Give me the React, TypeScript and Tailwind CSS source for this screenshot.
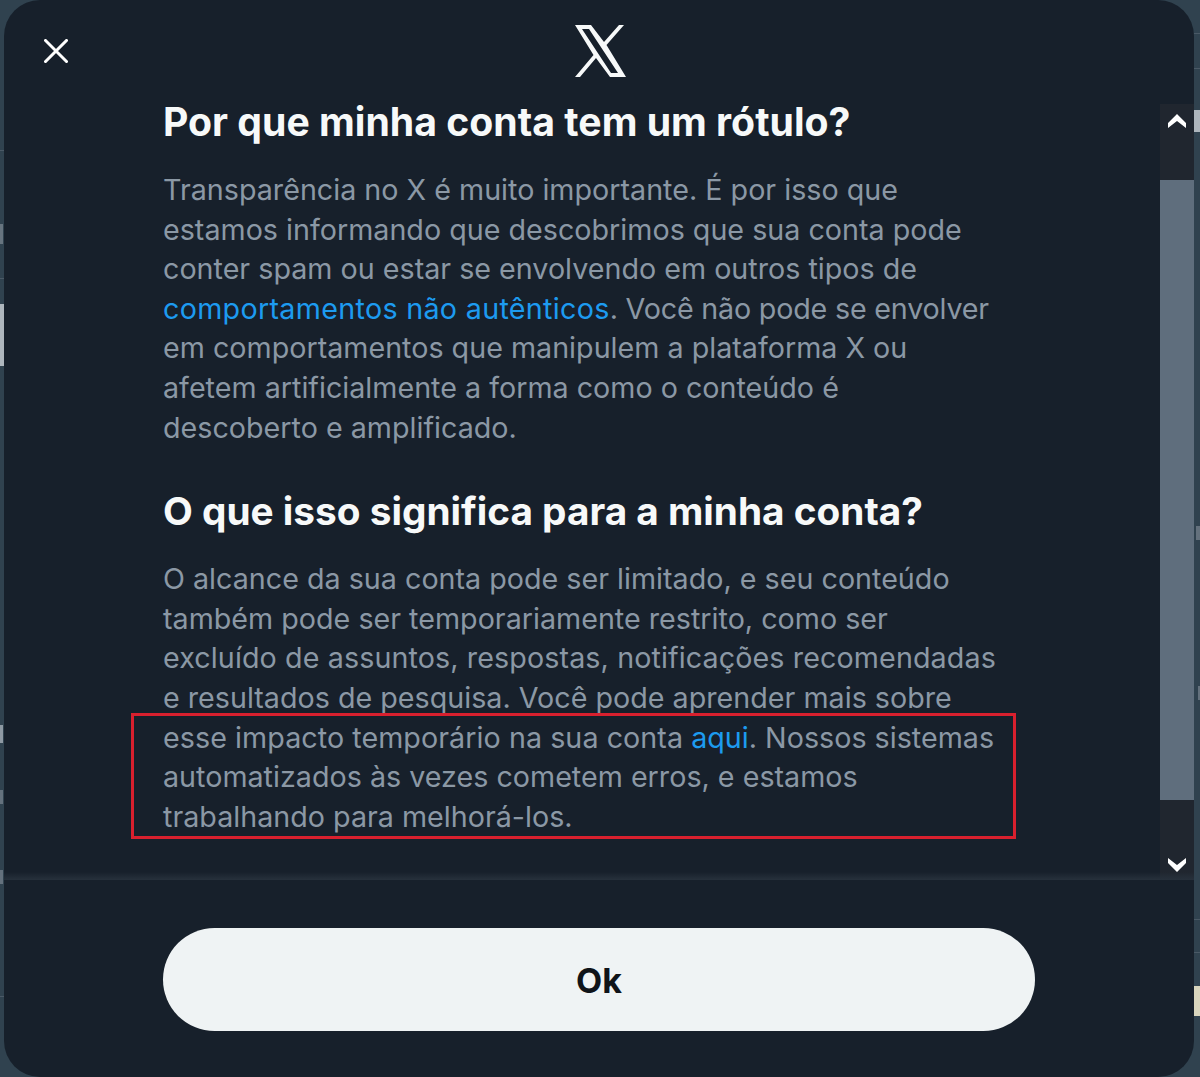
const body = "text-[28.7px] leading-[39.6px] text-[#8b98a5]"
const heading = "leading-[36px] font-bold text-[#f7f9f9]"

// bits of the page behind the dialog, only visible in the gutters
const gutterBits = [
  "left-0 top-[150px] h-px w-[4px] bg-[#4a5966]",
  "left-0 top-[224px] h-[20px] w-[3px] bg-[#67747f]",
  "left-0 top-[278px] h-px w-[4px] bg-[#4a5966]",
  "left-0 top-[304px] h-[62px] w-[4px] bg-[#aeb6bd]",
  "left-0 top-[725px] h-[18px] w-[3px] bg-[#8e99a3]",
  "left-0 top-[790px] h-[14px] w-[3px] bg-[#64717d]",
  "left-0 top-[870px] h-[14px] w-[3px] bg-[#64717d]",
  "left-0 top-[996px] h-px w-[4px] bg-[#4a5966]",
  "right-0 top-[33px] h-px w-[6px] bg-[#4a5966]",
  "right-0 top-[68px] h-px w-[6px] bg-[#4a5966]",
  "right-0 top-[110px] h-[22px] w-[6px] bg-[#aeb6bd]",
  "right-0 top-[526px] h-[14px] w-[4px] bg-[#64717d]",
  "right-0 top-[686px] h-[14px] w-[2px] bg-[#64717d]",
  "right-0 top-[919px] h-px w-[6px] bg-[#4a5966]",
  "right-0 top-[952px] h-px w-[6px] bg-[#4a5966]",
  "right-0 top-[986px] h-[30px] w-[6px] bg-[#d8d5bd]",
]

function XLogo() {
  return (
    <svg viewBox="0 0 51 52" className="h-[52px] w-[51px] fill-[#f7f9f9]">
      <path fillRule="evenodd" d="M0 0H16L29 17 44 0H49L31.5 20 51 52H35L21 33 5 52H0L18.5 30ZM7 4H14L43 48H36Z" />
    </svg>
  )
}

function CloseIcon() {
  return (
    <svg viewBox="0 0 24 24" className="h-[24px] w-[24px] stroke-white" fill="none" strokeWidth="3" strokeLinecap="square">
      <path d="M1.5 1.5 22.5 22.5M22.5 1.5 1.5 22.5" />
    </svg>
  )
}

function Chevron({ up }: { up?: boolean }) {
  return (
    <svg viewBox="0 0 18 14" className="h-[14px] w-[18px] fill-white">
      <path d={up ? "M9 0 18 9 18 14 9 7 0 14 0 9Z" : "M9 14 0 5 0 0 9 7 18 0 18 5Z"} />
    </svg>
  )
}

export default function App() {
  return (
    <div className="relative h-[1077px] w-[1200px] overflow-hidden bg-[#30424f] pl-[4px] pr-[6px] font-['Inter',sans-serif]">
      {gutterBits.map((bit) => (
        <div key={bit} className={`absolute ${bit}`} />
      ))}
      <div className="flex h-full flex-col rounded-[36px] bg-[#17202b]">
        <div className="relative flex h-[104px] shrink-0 items-start justify-center pl-[2px] pt-[25px]">
          <button className="absolute left-[40px] top-[39px]"><CloseIcon /></button>
          <XLogo />
        </div>
        <div className="relative flex h-[776px] shrink-0">
          <div className="flex-1 pl-[159px] pr-[160px]">
            <h2 className={`${heading} text-[39.2px]`}>Por que minha conta tem um rótulo?</h2>
            <p className={`${body} mt-[30px]`}>
              Transparência no X é muito importante. É por isso que estamos informando que descobrimos que sua conta pode conter spam ou estar se envolvendo em outros tipos de <span className="tracking-[0.3px] text-[#1d9bf0]">comportamentos não autênticos</span><span className="tracking-[-0.2px]">. Você não pode se envolver</span> em comportamentos que manipulem a plataforma X ou afetem artificialmente a forma como o conteúdo é descoberto e amplificado.
            </p>
            <h2 className={`${heading} mt-[46px] text-[38.75px]`}>O que isso significa para a minha conta?</h2>
            <p className={`${body} mt-[30px]`}>
              O alcance da sua conta pode ser limitado, e seu conteúdo também pode ser temporariamente restrito, como ser <span className="tracking-[0.1px]">excluído de assuntos, respostas, notificações recomendadas</span> e resultados de pesquisa. Você pode aprender mais sobre <span className="tracking-[0.05px]">esse impacto temporário na sua conta</span> <span className="text-[#1d9bf0]">aqui</span>. Nossos sistemas automatizados às vezes cometem erros, e estamos trabalhando para melhorá-los.
            </p>
          </div>
          <div className="flex w-[34px] shrink-0 flex-col bg-[#20262f]">
            <div className="flex h-[76px] justify-center pt-[10px]"><Chevron up /></div>
            <div className="h-[620px] bg-[#5f6e7d]" />
            <div className="flex flex-1 items-end justify-center pb-[8px]"><Chevron /></div>
          </div>
          <div className="absolute inset-x-0 bottom-0 h-[8px] bg-gradient-to-b from-transparent to-[#27313c]" />
        </div>
        <div className="flex flex-1 items-start px-[159px] pt-[48px]">
          <button className="h-[103px] w-full rounded-full bg-[#eff3f4] pt-[2px] text-[34px] font-bold text-[#0f1419]">Ok</button>
        </div>
      </div>
      <div className="pointer-events-none absolute left-[131px] top-[713px] h-[126px] w-[885px] border-[3px] border-[#d9202e]" />
    </div>
  )
}
